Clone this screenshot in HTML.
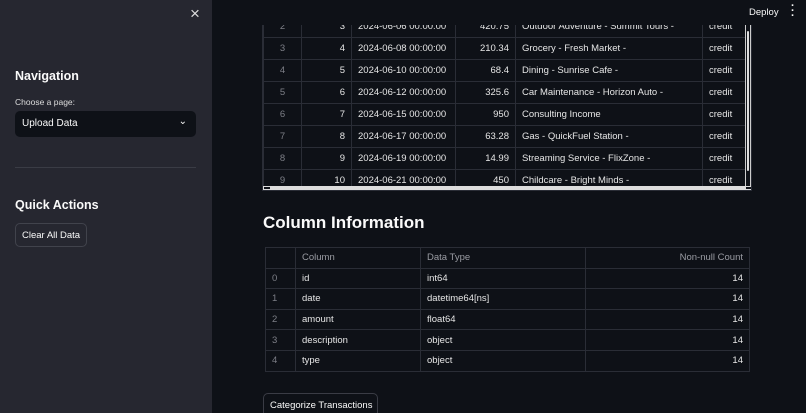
<!DOCTYPE html><html><head><style>
*{margin:0;padding:0;box-sizing:border-box}
html,body{width:806px;height:413px;overflow:hidden}
body{background:#0e1117;font-family:"Liberation Sans",sans-serif;color:#fafafa;position:relative;font-size:10px}
.sb{position:absolute;left:0;top:0;width:212px;height:413px;background:#262730;z-index:3}
.abs{position:absolute;white-space:nowrap}
table{border-collapse:collapse;position:absolute;table-layout:fixed}
td{border:1px solid #2a2d36;white-space:nowrap;overflow:hidden;padding:0 6px;font-size:9.5px;color:#e6e6e6}
.t1 td{height:22px}
.idx{color:#7d7f87;text-align:center}
.r{text-align:right}
.t2 td{height:20.6px}
.t2 tr:first-child td{color:#9a9ca3}
</style></head><body>
<div class="sb">
<div class="abs" style="left:190px;top:4px;font-size:17px;color:#ddd">×</div>
<div class="abs" style="left:15px;top:69px;font-size:12.5px;font-weight:bold">Navigation</div>
<div class="abs" style="left:15px;top:97px;font-size:8.5px;color:#ddd">Choose a page:</div>
<div class="abs" style="left:15px;top:111px;width:181px;height:26px;background:#0e1117;border-radius:5px;font-size:10px;padding:7px 7px">Upload Data<span style="position:absolute;right:9px;top:5px;font-size:10px">⌄</span></div>
<div class="abs" style="left:15px;top:167px;width:181px;height:1px;background:#3a3c45"></div>
<div class="abs" style="left:15px;top:198px;font-size:12.5px;font-weight:bold">Quick Actions</div>
<div class="abs" style="left:15px;top:223px;width:72px;height:24px;border:1px solid #41434c;border-radius:5px;font-size:9.5px;padding:6px 6px">Clear All Data</div>
</div>
<div class="abs" style="left:262px;top:0;width:490px;height:191px;border:1px solid #2a2d36;overflow:hidden">
<table class="t1" style="left:0;top:14px;width:483px">
<colgroup><col style="width:38px"><col style="width:50px"><col style="width:104px"><col style="width:60px"><col style="width:187px"><col style="width:44px"></colgroup>
<tr><td class="idx">2</td><td class="r">3</td><td>2024-06-06 00:00:00</td><td class="r">420.75</td><td>Outdoor Adventure - Summit Tours -</td><td>credit</td></tr>
<tr><td class="idx">3</td><td class="r">4</td><td>2024-06-08 00:00:00</td><td class="r">210.34</td><td>Grocery - Fresh Market -</td><td>credit</td></tr>
<tr><td class="idx">4</td><td class="r">5</td><td>2024-06-10 00:00:00</td><td class="r">68.4</td><td>Dining - Sunrise Cafe -</td><td>credit</td></tr>
<tr><td class="idx">5</td><td class="r">6</td><td>2024-06-12 00:00:00</td><td class="r">325.6</td><td>Car Maintenance - Horizon Auto -</td><td>credit</td></tr>
<tr><td class="idx">6</td><td class="r">7</td><td>2024-06-15 00:00:00</td><td class="r">950</td><td>Consulting Income</td><td>credit</td></tr>
<tr><td class="idx">7</td><td class="r">8</td><td>2024-06-17 00:00:00</td><td class="r">63.28</td><td>Gas - QuickFuel Station -</td><td>credit</td></tr>
<tr><td class="idx">8</td><td class="r">9</td><td>2024-06-19 00:00:00</td><td class="r">14.99</td><td>Streaming Service - FlixZone -</td><td>credit</td></tr>
<tr><td class="idx">9</td><td class="r">10</td><td>2024-06-21 00:00:00</td><td class="r">450</td><td>Childcare - Bright Minds -</td><td>credit</td></tr>
</table>
<div class="abs" style="right:0;top:0;width:6px;height:190px;background:#0e1117;border-left:1px solid #ccc;border-right:1px solid #ccc"><div style="margin:30px 1px 0;width:2px;height:140px;background:#ddd;border-radius:2px"></div></div>
<div class="abs" style="left:0;bottom:0;width:490px;height:4px;background:#0e1117;border:1px solid #ddd;border-top:1px solid #ddd"><div style="margin:0 6px;height:2px;background:#ddd"></div></div>
</div>
<div class="abs" style="left:212px;top:0;width:594px;height:25px;background:#0e1117;z-index:2"></div>
<div class="abs" style="left:749px;top:7px;font-size:9.5px;z-index:4">Deploy</div>
<div class="abs" style="left:791px;top:4px;font-size:11px;font-weight:bold;line-height:5px;z-index:4">·<br>·<br>·</div>
<div class="abs" style="left:263px;top:213px;font-size:17px;font-weight:bold">Column Information</div>
<table class="t2" style="left:265px;top:247px;width:484px">
<colgroup><col style="width:30px"><col style="width:125px"><col style="width:165px"><col style="width:164px"></colgroup>
<tr><td></td><td>Column</td><td>Data Type</td><td class="r">Non-null Count</td></tr>
<tr><td class="idx" style="text-align:left">0</td><td>id</td><td>int64</td><td class="r">14</td></tr>
<tr><td class="idx" style="text-align:left">1</td><td>date</td><td>datetime64[ns]</td><td class="r">14</td></tr>
<tr><td class="idx" style="text-align:left">2</td><td>amount</td><td>float64</td><td class="r">14</td></tr>
<tr><td class="idx" style="text-align:left">3</td><td>description</td><td>object</td><td class="r">14</td></tr>
<tr><td class="idx" style="text-align:left">4</td><td>type</td><td>object</td><td class="r">14</td></tr>
</table>
<div class="abs" style="left:263px;top:393px;width:115px;height:26px;border:1px solid #3a3c45;border-radius:5px;font-size:9.5px;padding:6px 6px">Categorize Transactions</div>
</body></html>
